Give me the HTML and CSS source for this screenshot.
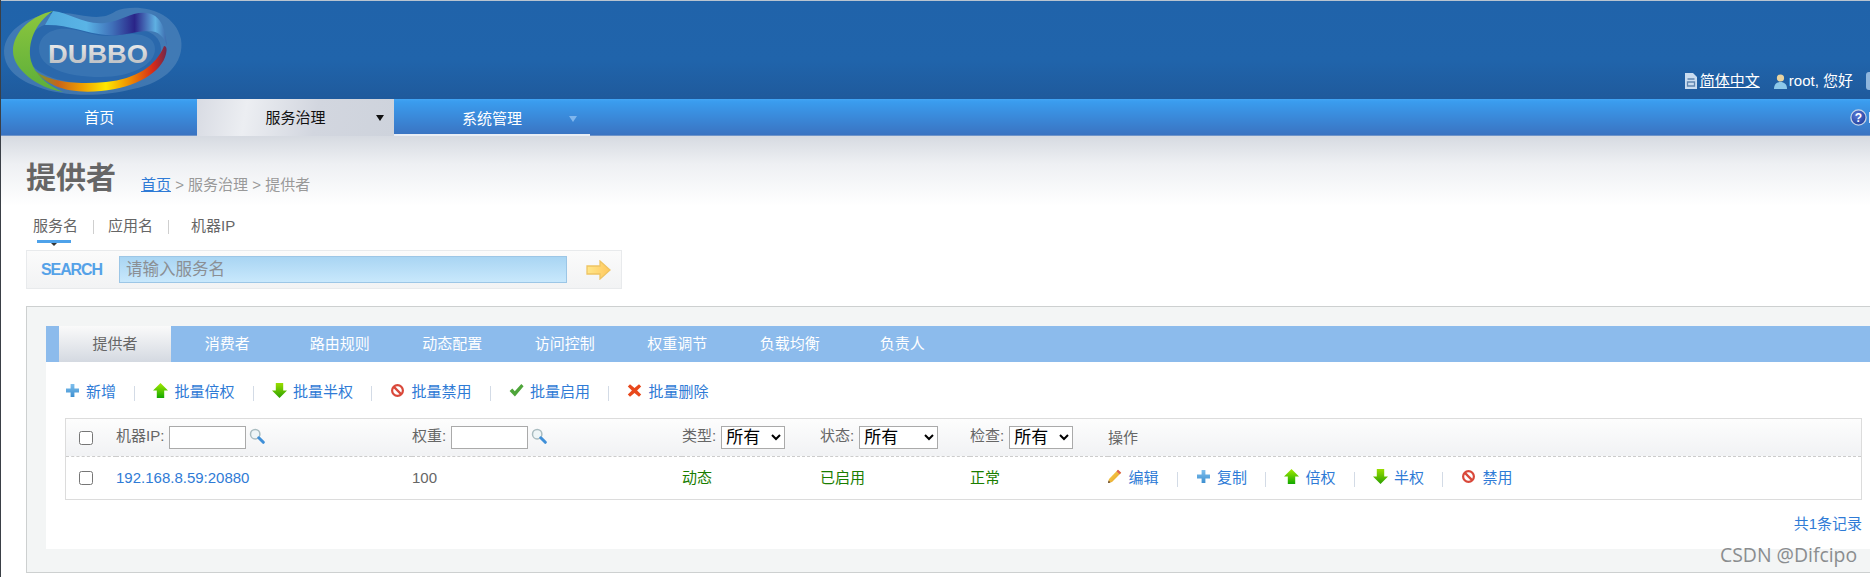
FILE: index.html
```html
<!DOCTYPE html>
<html lang="zh-CN">
<head>
<meta charset="utf-8">
<title>Dubbo</title>
<link rel="stylesheet" href="styles.css">
</head>
<body>
<svg class="defs" width="0" height="0" aria-hidden="true">
  <defs>
    <linearGradient id="gPlus" x1="0" y1="0" x2="0" y2="1"><stop offset="0" stop-color="#7fc0ee"/><stop offset="1" stop-color="#3d8fd0"/></linearGradient>
    <linearGradient id="gUp" x1="0" y1="0" x2="0" y2="1"><stop offset="0" stop-color="#a4ea00"/><stop offset="1" stop-color="#12a800"/></linearGradient>
    <linearGradient id="gDown" x1="0" y1="0" x2="0" y2="1"><stop offset="0" stop-color="#9ade00"/><stop offset="1" stop-color="#2ba000"/></linearGradient>
    <linearGradient id="gArrow" x1="0" y1="0" x2="1" y2="0"><stop offset="0" stop-color="#ffe78a"/><stop offset="1" stop-color="#ffc75e"/></linearGradient>
    <linearGradient id="gPen" x1="0" y1="0" x2="1" y2="1"><stop offset="0" stop-color="#fbd85a"/><stop offset="1" stop-color="#e39a1c"/></linearGradient>
    <symbol id="i-plus" viewBox="0 0 15 15"><path d="M5.600 1h3.800v4.600h4.600v3.800H9.400V14H5.600V9.400H1V5.600h4.600z" fill="url(#gPlus)"/></symbol>
    <symbol id="i-up" viewBox="0 0 15 15"><path d="M7.500 0 15 7.600h-3.800V15H3.800V7.600H0z" fill="url(#gUp)"/></symbol>
    <symbol id="i-down" viewBox="0 0 15 15"><path d="M3.800 0h7.400v7.400H15L7.500 15 0 7.400h3.800z" fill="url(#gDown)"/></symbol>
    <symbol id="i-ban" viewBox="0 0 15 15"><circle cx="7.500" cy="7.500" r="5.400" fill="#fff" stroke="#d9483a" stroke-width="2.200"/><path d="M3.900 3.900l7.200 7.200" stroke="#d9483a" stroke-width="2.200"/></symbol>
    <symbol id="i-check" viewBox="0 0 15 15"><path d="M.6 8l2.700-2.400 2.500 2.700L12.300 1l2.300 2.200-8.700 10.200z" fill="#4ea53a"/></symbol>
    <symbol id="i-x" viewBox="0 0 15 15"><path d="M3 1.200l4.500 3.900 4.500-3.900 2.200 2.400-4.100 3.900 4.100 4-2.200 2.300-4.500-3.900L3 13.800.8 11.500l4.100-4-4.100-3.900z" fill="#e8481c"/></symbol>
    <symbol id="i-pen" viewBox="0 0 15 15"><path d="M11 .8l3.200 3L5 13 1 14l1-4z" fill="url(#gPen)"/><path d="M11 .8l3.200 3-1.500 1.500-3.200-3z" fill="#d9605a"/><path d="M1 14l.6-2.500 1.900 1.900z" fill="#5a4030"/></symbol>
    <symbol id="i-search" viewBox="0 0 16 16"><circle cx="6.200" cy="6.200" r="4.700" fill="#eef5f7" stroke="#a9bcc0" stroke-width="1.500"/><path d="M9.800 9.800l4.500 4.500" stroke="#3f8fd8" stroke-width="3" stroke-linecap="round"/></symbol>
  </defs>
</svg>

<div class="page">
  <header class="top">
    <svg class="logo" width="186" height="98" viewBox="0 0 186 98" role="img" aria-label="Dubbo">
      <defs>
        <linearGradient id="lTop" x1="40" y1="0" x2="170" y2="0" gradientUnits="userSpaceOnUse">
          <stop offset="0" stop-color="#4fa8dc"/><stop offset=".35" stop-color="#5ab4e6"/><stop offset=".55" stop-color="#3f6fb8"/><stop offset=".72" stop-color="#2a2488"/><stop offset=".88" stop-color="#5fb0e2"/><stop offset="1" stop-color="#2f4f98"/>
        </linearGradient>
        <linearGradient id="lBot" x1="30" y1="0" x2="166" y2="0" gradientUnits="userSpaceOnUse">
          <stop offset="0" stop-color="#58a83c"/><stop offset=".2" stop-color="#c8641a"/><stop offset=".38" stop-color="#f0a000"/><stop offset=".55" stop-color="#ffe800"/><stop offset=".72" stop-color="#f09000"/><stop offset=".9" stop-color="#d62a18"/><stop offset="1" stop-color="#6a2850"/>
        </linearGradient>
        <linearGradient id="lGreen" x1="0" y1="0" x2="0" y2="1"><stop offset="0" stop-color="#8cc63e"/><stop offset="1" stop-color="#5cae3a"/></linearGradient>
        <linearGradient id="lText" x1="0" y1="0" x2="0" y2="1"><stop offset="0" stop-color="#f2f2f2"/><stop offset="1" stop-color="#b4b8bc"/></linearGradient>
      </defs>
      <path d="M3 50C4 28 30 12 60 12c20 0 38 10 55-2 20-8 58-2 65 28 4 24-16 44-48 50-30 8-70 8-95-2C20 80 3 70 3 50z" fill="#5f8fc0" opacity=".5"/>
      <path d="M26 50C26 30 42 20 62 22c20 2 36 12 56 8 22-6 42 2 42 18 0 18-24 34-58 35-42 1-76-10-76-33z" fill="#2a68ac"/>
      <path d="M38 48c0-14 14-22 30-20 18 2 30 10 50 6 18-3 36 0 36 14 0 16-24 28-54 28-36 0-62-10-62-28z" fill="#3a76b4" opacity=".9"/>
      <path d="M52 10C70 12 82 24 104 22c18-2 30-14 46-9 12 4 15 20 16 32-3-9-8-15-19-15-14 0-26 6-42 4C84 32 66 23 44 24z" fill="url(#lTop)"/>
      <path d="M30 66c14 15 45 18 75 15 30-3 50-16 58-36 3 0 3 4 2 8-4 18-30 34-65 37-32 3-54-4-70-24z" fill="url(#lBot)"/>
      <path d="M52 10C32 14 12 30 12 50c0 18 24 37 50 41C46 84 34 74 30 60 26 42 34 22 52 10z" fill="url(#lGreen)"/>
      <text class="logo-text" x="47" y="62" textLength="100" lengthAdjust="spacingAndGlyphs" fill="url(#lText)">DUBBO</text>
    </svg>
    <div class="top-links">
      <svg class="top-icon" width="14" height="18" viewBox="0 0 14 18"><path d="M1 1h8l4 4v12H1z" fill="#c9dcf0"/><path d="M3.500 7h7M3.500 10h7v4h-7z" stroke="#5f85b0" stroke-width="1.300" fill="none"/></svg>
      <a class="lang" href="#">简体中文</a>
      <svg class="top-icon user-icon" width="15" height="18" viewBox="0 0 15 18"><circle cx="7.500" cy="6" r="3.600" fill="#e8d3a0"/><path d="M1 17c0-5 3-7 6.500-7S14 12 14 17z" fill="#8cc8ea"/></svg>
      <span class="hello">root, 您好</span>
      <span class="logout-icon"></span>
    </div>
  </header>

  <nav class="nav">
    <a class="nav-item" href="#">首页</a>
    <a class="nav-item active" href="#">服务治理<i class="caret dark"></i></a>
    <a class="nav-item underlined" href="#">系统管理<i class="caret light"></i></a>
    <div class="nav-help">
      <svg width="17" height="17" viewBox="0 0 17 17"><defs><radialGradient id="gHelp" cx=".4" cy=".35" r=".7"><stop offset="0" stop-color="#5a78d8"/><stop offset="1" stop-color="#1f3f9c"/></radialGradient></defs><circle cx="8.500" cy="8.500" r="7.600" fill="url(#gHelp)" stroke="#c5d2e6" stroke-width="1.300"/><text class="help-q" x="8.500" y="12.800" text-anchor="middle" fill="#fff">?</text></svg>
    </div>
  </nav>

  <main class="content">
    <div class="heading">
      <h1 class="title">提供者</h1>
      <div class="crumbs"><a href="#">首页</a> &gt; 服务治理 &gt; 提供者</div>
    </div>

    <div class="search-tabs">
      <span class="st current">服务名</span><i class="st-sep"></i>
      <span class="st">应用名</span><i class="st-sep"></i>
      <span class="st st-last">机器IP</span>
    </div>

    <form class="search">
      <span class="search-label">SEARCH</span>
      <input class="search-input" type="text" placeholder="请输入服务名">
      <svg class="search-go" width="25" height="20" viewBox="0 0 25 20"><path d="M1 6h13V1l10 9-10 9v-5H1z" fill="url(#gArrow)" stroke="#eec463" stroke-width="1.300"/></svg>
    </form>

    <section class="panel">
      <div class="inner">
        <ul class="tabs">
          <li class="tab active">提供者</li>
          <li class="tab">消费者</li>
          <li class="tab">路由规则</li>
          <li class="tab">动态配置</li>
          <li class="tab">访问控制</li>
          <li class="tab">权重调节</li>
          <li class="tab">负载均衡</li>
          <li class="tab">负责人</li>
        </ul>

        <div class="actions bulk">
          <a class="act" href="#"><svg class="ic"><use href="#i-plus"/></svg>新增</a><i class="sep"></i>
          <a class="act" href="#"><svg class="ic"><use href="#i-up"/></svg>批量倍权</a><i class="sep"></i>
          <a class="act" href="#"><svg class="ic"><use href="#i-down"/></svg>批量半权</a><i class="sep"></i>
          <a class="act" href="#"><svg class="ic"><use href="#i-ban"/></svg>批量禁用</a><i class="sep"></i>
          <a class="act" href="#"><svg class="ic"><use href="#i-check"/></svg>批量启用</a><i class="sep"></i>
          <a class="act" href="#"><svg class="ic"><use href="#i-x"/></svg>批量删除</a>
        </div>

        <table class="list">
          <colgroup>
            <col class="c-check"><col class="c-ip"><col class="c-weight"><col class="c-type"><col class="c-state"><col class="c-checked"><col>
          </colgroup>
          <thead>
            <tr>
              <th><input class="cb" type="checkbox"></th>
              <th>机器IP:<input class="filter" type="text"><svg class="lens"><use href="#i-search"/></svg></th>
              <th>权重:<input class="filter" type="text"><svg class="lens"><use href="#i-search"/></svg></th>
              <th>类型:<select class="sel s64"><option>所有</option></select></th>
              <th>状态:<select class="sel s79"><option>所有</option></select></th>
              <th>检查:<select class="sel s64"><option>所有</option></select></th>
              <th>操作</th>
            </tr>
          </thead>
          <tbody>
            <tr>
              <td><input class="cb" type="checkbox"></td>
              <td><a href="#">192.168.8.59:20880</a></td>
              <td>100</td>
              <td class="ok">动态</td>
              <td class="ok">已启用</td>
              <td class="ok">正常</td>
              <td>
                <div class="actions row-actions">
                  <a class="act" href="#"><svg class="ic"><use href="#i-pen"/></svg>编辑</a><i class="sep"></i>
                  <a class="act" href="#"><svg class="ic"><use href="#i-plus"/></svg>复制</a><i class="sep"></i>
                  <a class="act" href="#"><svg class="ic"><use href="#i-up"/></svg>倍权</a><i class="sep"></i>
                  <a class="act" href="#"><svg class="ic"><use href="#i-down"/></svg>半权</a><i class="sep"></i>
                  <a class="act" href="#"><svg class="ic"><use href="#i-ban"/></svg>禁用</a>
                </div>
              </td>
            </tr>
          </tbody>
        </table>

        <div class="total">共1条记录</div>
      </div>
    </section>
  </main>
  <div class="watermark">CSDN @Difcipo</div>
</div>
</body>
</html>
```

FILE: styles.css
```css
* { box-sizing: border-box; }
html, body { margin: 0; padding: 0; background: #fff; }
body {
  width: 1870px;
  height: 577px;
  overflow: hidden;
  font: 15px/20px "Liberation Sans", "Noto Sans CJK SC", sans-serif;
  color: #666;
}
a { color: #2f7bd6; text-decoration: none; }
.defs { position: absolute; }
.page { position: relative; height: 577px; overflow: hidden; border-left: 1px solid #3a3f46; }

.top {
  height: 99px;
  display: flex;
  justify-content: space-between;
  align-items: flex-end;
  border-top: 1px solid #b9c4d0;
  background: linear-gradient(#2063aa, #2064ab 60%, #1f5a9c);
}
.logo { align-self: flex-start; display: block; }
.logo-text { font: bold 25px "Liberation Sans", sans-serif; }
.top-links { display: flex; align-items: center; height: 18px; margin-bottom: 9px; color: #fff; white-space: nowrap; }
.top-icon { display: block; flex: none; margin-left: -1px; }
.lang { color: #fff; text-decoration: underline; margin-left: 2px; }
.user-icon { margin-left: 13px; }
.hello { margin-left: 1px; }
.logout-icon { flex: none; width: 14px; height: 18px; margin-left: 13px; margin-right: -10px; border-radius: 3px; background: #8fb6dd; }

.nav {
  height: 37px;
  display: flex;
  background: linear-gradient(#41a4f4 0, #3a9cee 8%, #3a72c0 100%);
  box-shadow: inset 0 -1px 0 #6f94c8;
}
.nav-item {
  width: 196.400px;
  height: 37px;
  display: flex;
  align-items: center;
  justify-content: center;
  position: relative;
  color: #fff;
}
.nav-item.active { color: #111; background: linear-gradient(100deg, #d8dbe3, #eceef2 25%, #d2d6df 60%, #ced3dc); }
.nav-item.underlined { border-bottom: 2px solid #e8edf4; padding-top: 4px; }
.caret { position: absolute; right: 10px; top: 16px; border: 4px solid transparent; border-bottom: 0; border-top-width: 6px; }
.caret.dark { border-top-color: #111; }
.caret.light { border-top-color: #7fb6ee; right: 13px; top: 17px; }
.nav-help { margin-left: auto; margin-right: 0; display: flex; align-items: center; padding-bottom: 1px; }
.nav-help svg { display: block; }
.nav-help::after { content: ""; width: 1px; height: 11px; margin-left: 2px; background: #dbe9f8; }
.help-q { font: bold 12px "Liberation Sans", sans-serif; }

.content { padding: 22px 0 0 25px; background: linear-gradient(#d6dae1 0, #eef0f3 28px, #fff 70px); height: 441px; }
.heading { display: flex; align-items: baseline; height: 40px; }
.title { margin: 0; font: bold 30px/40px "Liberation Sans", "Noto Sans CJK SC", sans-serif; color: #666; }
.crumbs { margin-left: 25px; color: #999; position: relative; top: 2px; }
.crumbs a { text-decoration: underline; }

.search-tabs { display: flex; align-items: center; height: 20px; margin: 18px 0 0 7px; color: #666; }
.st { position: relative; white-space: nowrap; }
.st.current::after {
  content: "";
  position: absolute;
  left: 4px;
  top: 24px;
  width: 34px;
  height: 3px;
  background: #4ea2ea;
}
.st.current::before {
  content: "";
  position: absolute;
  left: 18px;
  top: 27px;
  border: 3px solid transparent;
  border-bottom: 0;
  border-top-color: #333;
}
.st-sep { width: 1px; height: 14px; background: #cfcfcf; margin: 2px 14.500px 0; }
.st-last { margin-left: 8px; }

.search {
  width: 596px;
  height: 39px;
  margin-top: 14px;
  display: flex;
  align-items: center;
  padding-left: 14px;
  border: 1px solid #e8eaec;
  background: linear-gradient(#fbfbfb, #f2f3f4);
}
.search-label { width: 78px; color: #55a2e8; font-weight: bold; font-size: 16px; letter-spacing: -1.100px; }
.search-input {
  width: 448px;
  height: 27px;
  padding: 0 0 0 6px;
  border: 1px solid #9cc6e6;
  background: linear-gradient(#a9d5f3, #c8e8fc);
  font: 16.500px "Liberation Sans", "Noto Sans CJK SC", sans-serif;
  outline: 0;
}
.search-input::placeholder { color: #8b8f94; opacity: 1; }
.search-go { margin-left: 19px; flex: none; }

.panel {
  margin-top: 17px;
  width: 1900px;
  height: 267px;
  padding: 19px 0 0 19px;
  border: 1px solid #cdd0d0;
  background: #f3f5f5;
}
.inner { width: 1824px; height: 223px; background: #fff; }
.tabs {
  list-style: none;
  margin: 0;
  padding: 0 0 0 13px;
  height: 36px;
  display: flex;
  background: #8cbbec;
}
.tab { width: 112.500px; line-height: 36px; text-align: center; color: #fff; }
.tab.active { width: 112px; color: #666; background: linear-gradient(#fafafa, #d4d9e1); }

.actions { display: flex; align-items: center; }
.bulk { height: 20px; margin: 20px 0 0 18.500px; }
.row-actions { margin-left: -1px; }
.act { display: flex; align-items: center; white-space: nowrap; }
.ic { width: 15px; height: 15px; margin-right: 6.500px; flex: none; margin-top: -3px; }
.sep { width: 1px; height: 15px; margin: 2px 18px 0 18px; background: #d3dbe6; flex: none; }

.list {
  table-layout: fixed;
  border-collapse: separate;
  border-spacing: 0;
  width: 1797px;
  margin: 16px 0 0 19px;
  border: 1px solid #dcdcdc;
}
.c-check { width: 50px; }
.c-ip { width: 296px; }
.c-weight { width: 270px; }
.c-type { width: 138px; }
.c-state { width: 150px; }
.c-checked { width: 138px; }
.list th {
  height: 38px;
  padding: 0;
  text-align: left;
  font-weight: normal;
  white-space: nowrap;
  background: linear-gradient(#fdfdfd, #f1f2f4);
  border-bottom: 1px dashed #ccc;
  vertical-align: middle;
}
.list td { height: 42px; padding: 0; vertical-align: middle; }
.list td:first-child .cb { margin-top: -1px; }
.cb { margin: 0 0 0 13px; width: 14px; height: 14px; display: block; }
.filter {
  width: 77px;
  height: 23px;
  margin: 0 0 0 5px;
  padding: 0;
  border: 1px solid #aaa;
  background: #fff;
  vertical-align: middle;
}
.lens { width: 16px; height: 16px; margin: -4px 0 0 3px; vertical-align: middle; }
.sel {
  height: 23px;
  margin-left: 5px;
  padding: 0;
  border: 1px solid #aaa;
  background: #fff;
  color: #000;
  font: 17px "Liberation Sans", "Noto Sans CJK SC", sans-serif;
  vertical-align: middle;
}
.s64 { width: 64px; }
.s79 { width: 79px; }
.ok { color: #1a7d00; }
.total { width: 1816px; margin: 14px 0 0; text-align: right; color: #2f7bd6; }

.watermark {
  position: absolute;
  left: 1719px;
  top: 542px;
  font: 19.400px/26px "Open Sans", sans-serif;
  color: #8a8d8f;
  white-space: nowrap;
}
```
